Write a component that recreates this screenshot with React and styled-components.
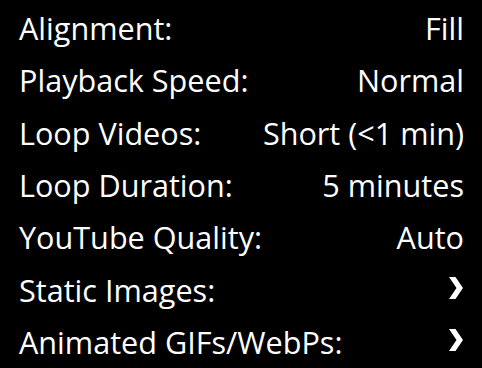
import React from "react";
import styled, { createGlobalStyle } from "styled-components";

const Global = createGlobalStyle`
  html, body { margin: 0; padding: 0; background: #000; }
  body { font-family: "Open Sans", "Noto Sans", sans-serif; }
`;

const Panel = styled.div`
  width: 482px;
  height: 368px;
  box-sizing: border-box;
  padding: 2px 18px 0 19px;
  background: #000;
  color: #fff;
  display: flex;
  flex-direction: column;
`;

const Row = styled.div`
  height: 52.3px;
  display: flex;
  align-items: center;
  justify-content: space-between;
  font-size: 30.6px;
  white-space: nowrap;
`;

const Label = styled.span``;
const Value = styled.span`
  text-align: right;
`;
const Chevron = styled.svg`
  flex: none;
  width: 14px;
  height: 22px;
  margin-right: 1px;
  margin-top: -4px;
  fill: #fff;
`;

const rows = [
  ["Alignment:", "Fill"],
  ["Playback Speed:", "Normal"],
  ["Loop Videos:", "Short (<1 min)"],
  ["Loop Duration:", "5 minutes"],
  ["YouTube Quality:", "Auto"],
  ["Static Images:", null],
  ["Animated GIFs/WebPs:", null],
];

export default function App() {
  return (
    <>
      <Global />
      <Panel>
        {rows.map(([l, v]) => (
          <Row key={l}>
            <Label>{l}</Label>
            {v ? (
              <Value>{v}</Value>
            ) : (
              <Chevron viewBox="0 0 14 22">
                <polygon points="0,0 6.5,0 14,11 6.5,22 0,22 7.5,11" />
              </Chevron>
            )}
          </Row>
        ))}
      </Panel>
    </>
  );
}
